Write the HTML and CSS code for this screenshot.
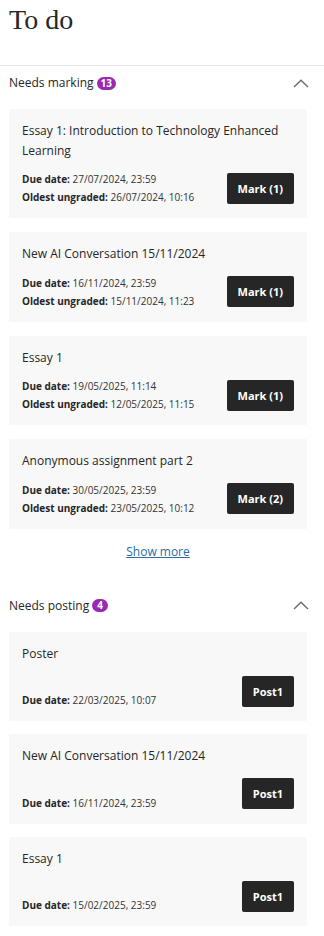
FILE: index.html
```html
<!DOCTYPE html>
<html lang="en">
<head>
<meta charset="utf-8">
<title>To do</title>
<link rel="stylesheet" href="styles.css">
</head>
<body>
<header class="page-header">
  <h1 class="page-title">To do</h1>
</header>

<section class="group">
  <div class="group-header">
    <h2 class="group-title">Needs marking <span class="badge">13</span></h2>
    <button class="collapse" aria-label="Collapse">
      <svg width="16" height="9" viewBox="0 0 16 9"><path d="M1 8 L8 1.2 L15 8" fill="none" stroke="#6b6b6b" stroke-width="1.4"/></svg>
    </button>
  </div>
  <ul class="cards">
    <li class="card">
      <div class="card-title">Essay 1: Introduction to Technology Enhanced Learning</div>
      <div class="card-row">
        <div class="meta">
          <div><b>Due date:</b> 27/07/2024, 23:59</div>
          <div><b>Oldest ungraded:</b> 26/07/2024, 10:16</div>
        </div>
        <button class="action">Mark (1)</button>
      </div>
    </li>
    <li class="card">
      <div class="card-title">New AI Conversation 15/11/2024</div>
      <div class="card-row">
        <div class="meta">
          <div><b>Due date:</b> 16/11/2024, 23:59</div>
          <div><b>Oldest ungraded:</b> 15/11/2024, 11:23</div>
        </div>
        <button class="action">Mark (1)</button>
      </div>
    </li>
    <li class="card">
      <div class="card-title">Essay 1</div>
      <div class="card-row">
        <div class="meta">
          <div><b>Due date:</b> 19/05/2025, 11:14</div>
          <div><b>Oldest ungraded:</b> 12/05/2025, 11:15</div>
        </div>
        <button class="action">Mark (1)</button>
      </div>
    </li>
    <li class="card">
      <div class="card-title">Anonymous assignment part 2</div>
      <div class="card-row">
        <div class="meta">
          <div><b>Due date:</b> 30/05/2025, 23:59</div>
          <div><b>Oldest ungraded:</b> 23/05/2025, 10:12</div>
        </div>
        <button class="action">Mark (2)</button>
      </div>
    </li>
  </ul>
  <div class="more"><a href="#" class="more-link">Show more</a></div>
</section>

<section class="group group-last">
  <div class="group-header">
    <h2 class="group-title">Needs posting <span class="badge">4</span></h2>
    <button class="collapse" aria-label="Collapse">
      <svg width="16" height="9" viewBox="0 0 16 9"><path d="M1 8 L8 1.2 L15 8" fill="none" stroke="#6b6b6b" stroke-width="1.4"/></svg>
    </button>
  </div>
  <ul class="cards">
    <li class="card">
      <div class="card-title">Poster</div>
      <div class="card-row">
        <div class="meta meta-end">
          <div><b>Due date:</b> 22/03/2025, 10:07</div>
        </div>
        <button class="action">Post1</button>
      </div>
    </li>
    <li class="card">
      <div class="card-title">New AI Conversation 15/11/2024</div>
      <div class="card-row">
        <div class="meta meta-end">
          <div><b>Due date:</b> 16/11/2024, 23:59</div>
        </div>
        <button class="action">Post1</button>
      </div>
    </li>
    <li class="card">
      <div class="card-title">Essay 1</div>
      <div class="card-row">
        <div class="meta meta-end">
          <div><b>Due date:</b> 15/02/2025, 23:59</div>
        </div>
        <button class="action">Post1</button>
      </div>
    </li>
  </ul>
</section>
</body>
</html>
```

FILE: styles.css
```css
* { box-sizing: border-box; }

body {
  margin: 0;
  background: #ffffff;
  color: #262626;
  font-family: "Open Sans", "Noto Sans", sans-serif;
}

.page-header {
  padding: 6px 9px 31px;
  border-bottom: 1px solid #e5e5e5;
}

.page-title {
  margin: 0;
  font-family: "Liberation Serif", serif;
  font-weight: 400;
  font-size: 28px;
  line-height: 28px;
  color: #262626;
}

.group {
  padding: 0 17px 0 9px;
}

.group-last {
  border-bottom: 1px solid #e5e5e5;
  padding-bottom: 12px;
}

.group-last .cards {
  gap: 13px;
}

.group-header {
  display: flex;
  align-items: center;
  justify-content: space-between;
  padding-top: 7px;
  margin-bottom: 16px;
}

.group-title {
  margin: 0;
  display: flex;
  align-items: center;
  gap: 3px;
  font-size: 12px;
  line-height: 20px;
  font-weight: 400;
  color: #262626;
}

.badge {
  display: inline-flex;
  align-items: center;
  justify-content: center;
  min-width: 16px;
  height: 13px;
  padding: 0 4px;
  border-radius: 7px;
  background: #9a2ab0;
  color: #ffffff;
  font-size: 10px;
  font-weight: 700;
  line-height: 13px;
}

.collapse {
  display: flex;
  align-items: center;
  justify-content: center;
  margin: 0 -2px 0 0;
  padding: 0;
  border: 0;
  background: none;
  width: 16px;
  height: 20px;
}

.cards {
  list-style: none;
  margin: 0;
  padding: 0;
  display: flex;
  flex-direction: column;
  gap: 14px;
}

.card {
  background: #f8f8f8;
  padding: 12px 13px;
}

.card-title {
  font-size: 12px;
  line-height: 19.5px;
  color: #262626;
}

.card-row {
  margin-top: 10px;
  display: flex;
  align-items: center;
  justify-content: space-between;
  gap: 8px;
}

.meta {
  font-size: 10px;
  line-height: 18px;
  color: #333333;
  min-height: 36px;
  display: flex;
  flex-direction: column;
}

.meta-end {
  justify-content: flex-end;
}

.meta b {
  font-weight: 700;
  color: #262626;
}

.action {
  flex: none;
  height: 31px;
  padding: 0 11px;
  border: 0;
  border-radius: 2px;
  background: #262626;
  color: #ffffff;
  font-family: "Open Sans", "Noto Sans", sans-serif;
  font-size: 11px;
  font-weight: 700;
}

.more {
  text-align: center;
  margin-top: 11px;
  margin-bottom: 27px;
  line-height: 20px;
}

.more-link {
  font-size: 12px;
  color: #2b6ca3;
  text-decoration: underline;
}
```
